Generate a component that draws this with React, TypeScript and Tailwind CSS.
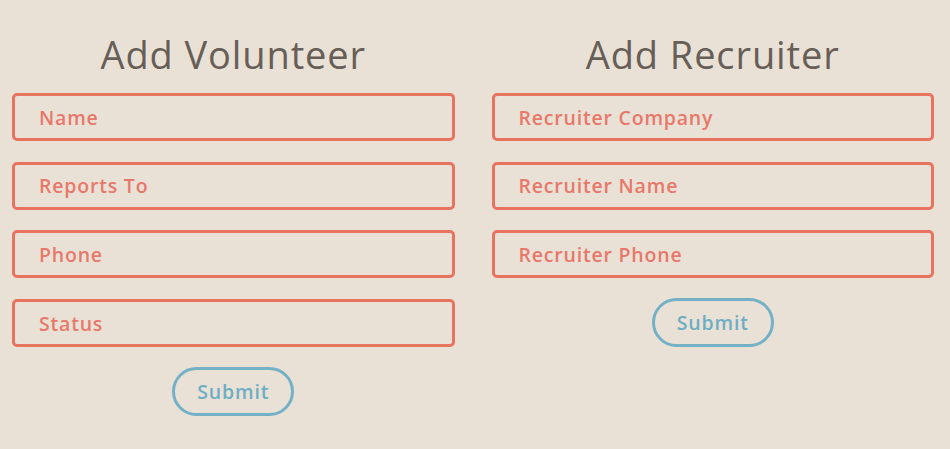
import React from "react";

const font = { fontFamily: '"Open Sans", "DejaVu Sans", sans-serif' };

function Field({ label }: { label: string }) {
  return (
    <input
      placeholder={label}
      className="block w-full h-[48px] border-[3px] border-[#e8735f] rounded-[5px] bg-transparent pl-[24px] text-[19.5px] font-semibold tracking-[0.8px] text-[#e8735f] placeholder:text-[#e8786a] outline-none"
    />
  );
}

function SubmitBtn() {
  return (
    <button className="w-[122px] h-[49px] rounded-full border-[3px] border-[#74b1c6] text-[19.5px] font-semibold text-[#6eaec4] tracking-[0.8px] bg-transparent">
      Submit
    </button>
  );
}

function Column({ title, fields }: { title: string; fields: string[] }) {
  return (
    <div className="flex flex-col items-center">
      <h2 className="text-[38px] leading-[44px] font-medium text-[#675e57] tracking-[0.9px] mt-[32px] mb-[17px]">{title}</h2>
      <div className="w-full flex flex-col gap-[20.7px]">
        {fields.map((f) => (
          <Field key={f} label={f} />
        ))}
      </div>
      <div className="mt-[20px]">
        <SubmitBtn />
      </div>
    </div>
  );
}

export default function App() {
  return (
    <div className="w-[950px] h-[449px] bg-[#e9e1d6] overflow-hidden" style={font}>
      <div className="grid grid-cols-2 gap-[37px] pl-[12px] pr-[16px]">
        <Column title="Add Volunteer" fields={["Name", "Reports To", "Phone", "Status"]} />
        <Column title="Add Recruiter" fields={["Recruiter Company", "Recruiter Name", "Recruiter Phone"]} />
      </div>
    </div>
  );
}
